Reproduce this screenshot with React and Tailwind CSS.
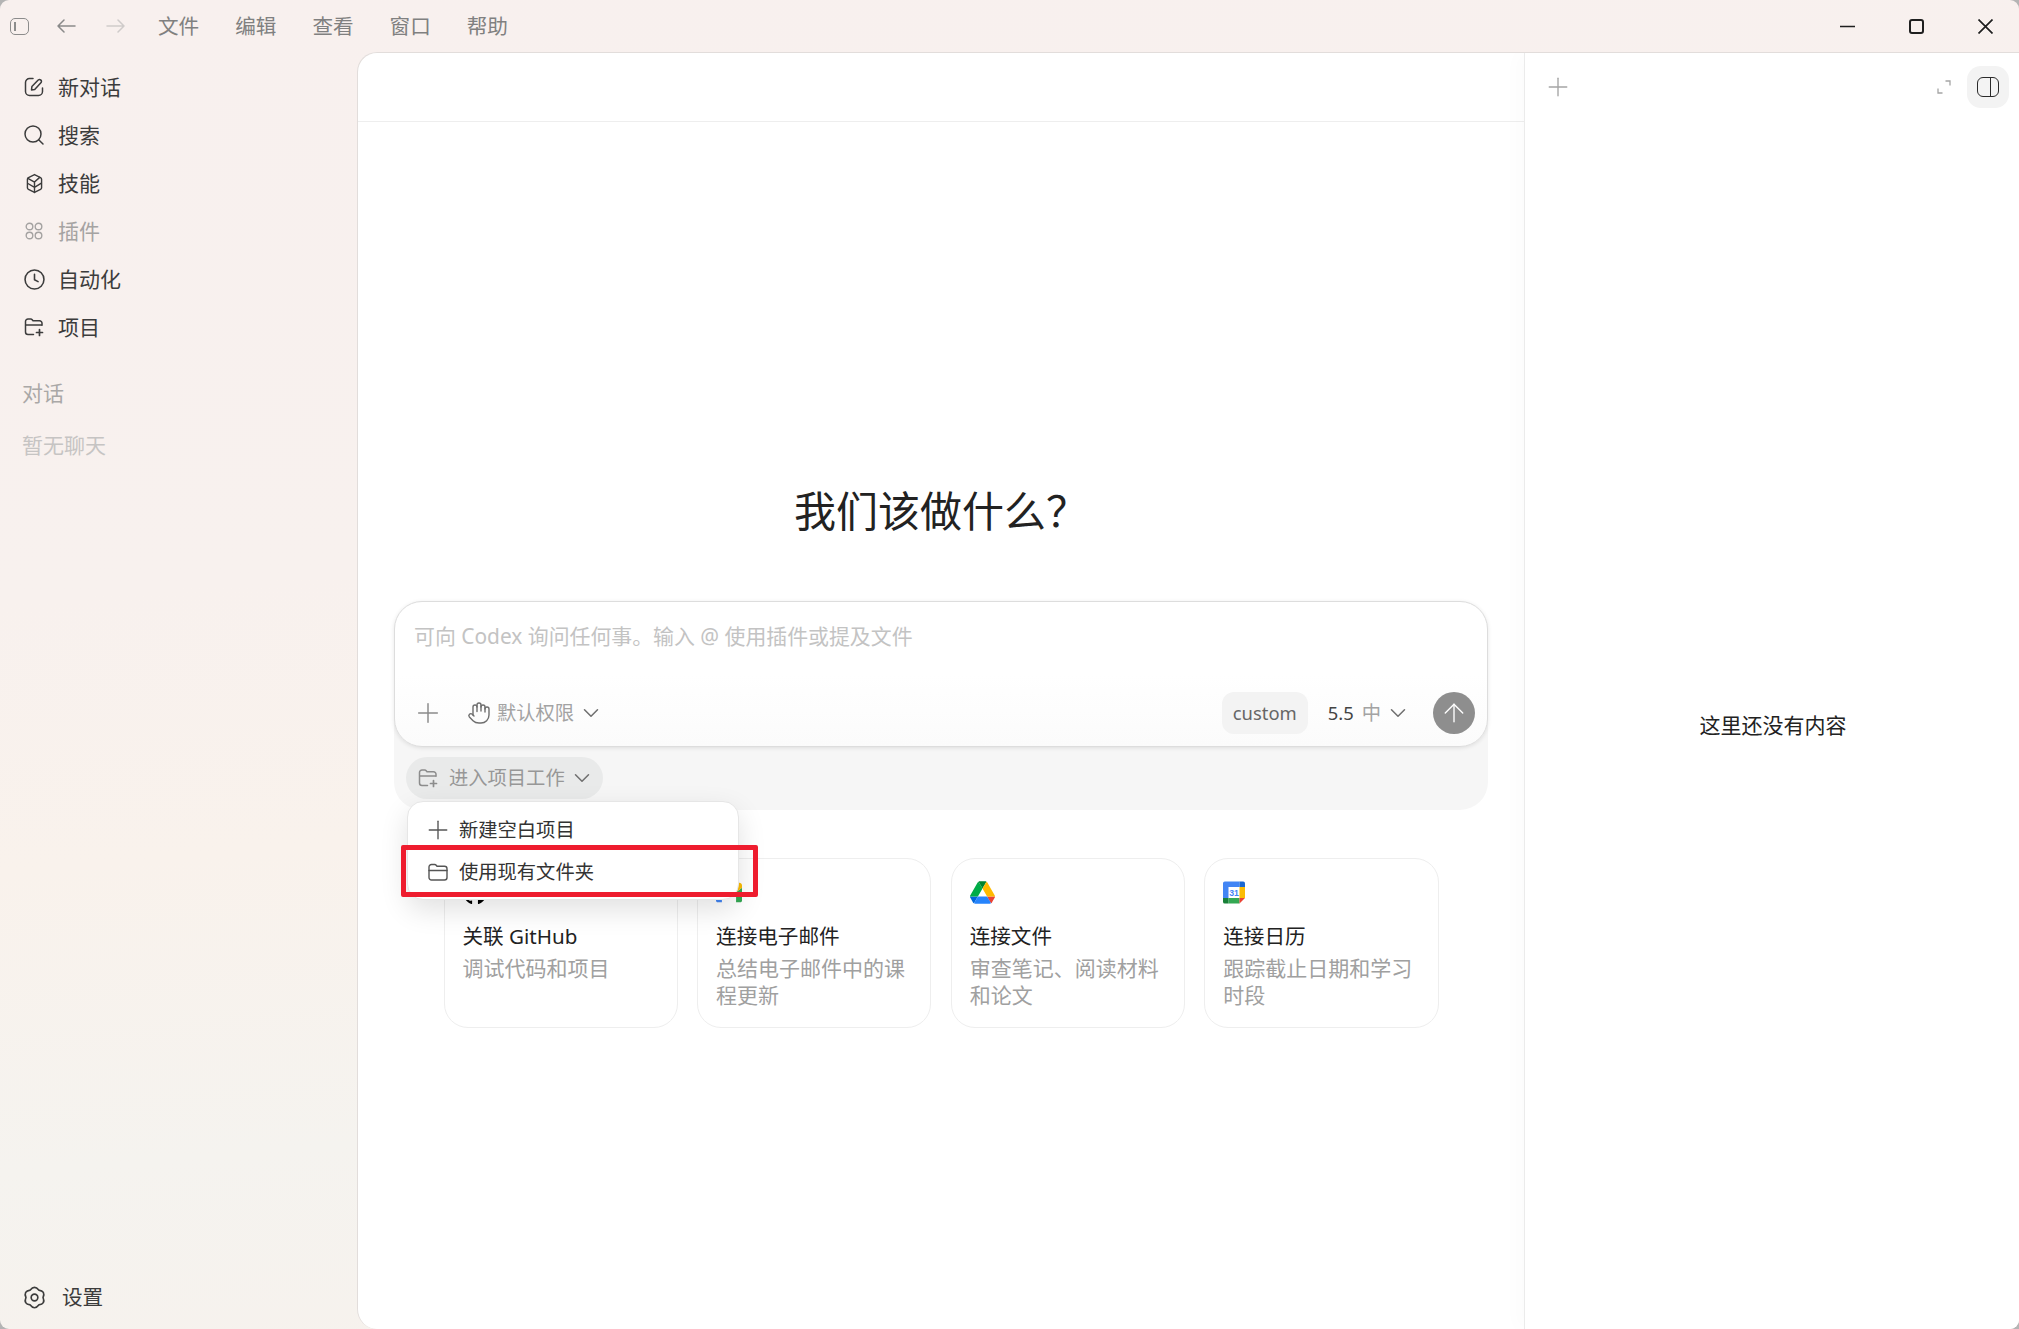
import React from "react";
import { ChevronDown, Hand, Plus, Search, ArrowUp } from "lucide-react";
import { FaGithub } from "react-icons/fa";

function FolderPlusIcon({ className }) {
  return (
    <svg viewBox="0 0 20 20" fill="none" stroke="currentColor" strokeWidth="1.5" strokeLinecap="round" strokeLinejoin="round" className={className}>
      <path d="M9.5 17.500H4a2.500 2.500 0 0 1-2.500-2.500V4.500a2.500 2.500 0 0 1 2.500-2.500h2.700c.6 0 1.100.3 1.500.8l.8 1h6.500a2.500 2.500 0 0 1 2.500 2.500v2" />
      <path d="M1.800 8h15.700" />
      <path d="M15.500 12.500v6M12.500 15.500h6" strokeWidth="1.700" />
    </svg>
  );
}

function ComposeIcon({ className }) {
  return (
    <svg viewBox="0 0 20 20" fill="none" stroke="currentColor" strokeWidth="1.500" strokeLinecap="round" strokeLinejoin="round" className={className}>
      <path d="M9 1.500H5.500a4 4 0 0 0-4 4v9a4 4 0 0 0 4 4h9a4 4 0 0 0 4-4V11" />
      <path d="M7.500 13l.4-3.400 6.300-6.500a1.900 1.900 0 0 1 2.700 2.700l-6.200 6.700z" />
    </svg>
  );
}

function CubeIcon({ className }) {
  return (
    <svg viewBox="0 0 18 22" fill="none" stroke="currentColor" strokeWidth="1.500" strokeLinecap="round" strokeLinejoin="round" className={className}>
      <path d="M9 1.500l6.400 3.200c.7.400 1.100 1 1.100 1.800v9c0 .8-.4 1.400-1.100 1.800L9 20.500l-6.400-3.200c-.7-.4-1.100-1-1.100-1.800v-9c0-.8.400-1.400 1.100-1.800z" />
      <path d="M2 5.500l7 4 5.500-5M9 9.500v11M2 11l7 4 7.300-4.500" />
    </svg>
  );
}

function DotsIcon({ className }) {
  return (
    <svg viewBox="0 0 18 18" fill="none" stroke="currentColor" strokeWidth="1.400" className={className}>
      <circle cx="4.500" cy="4.500" r="3.300" />
      <circle cx="13.500" cy="4.500" r="3.300" />
      <circle cx="4.500" cy="13.500" r="3.300" />
      <circle cx="13.500" cy="13.500" r="3.300" />
    </svg>
  );
}

function ClockIcon({ className }) {
  return (
    <svg viewBox="0 0 20 20" fill="none" stroke="currentColor" strokeWidth="1.500" strokeLinecap="round" strokeLinejoin="round" className={className}>
      <circle cx="10" cy="10" r="9" />
      <path d="M10 5v5.200l3.400 1.800" />
    </svg>
  );
}

function GearIcon({ className }) {
  return (
    <svg viewBox="0 0 24 24" fill="none" stroke="currentColor" strokeWidth="1.600" strokeLinecap="round" strokeLinejoin="round" className={className}>
      <path d="M7.900 4.900Q12 -0.500 16.100 4.900Q22.800 5.750 20.200 12Q22.800 18.250 16.100 19.100Q12 24.500 7.900 19.100Q1.200 18.250 3.800 12Q1.200 5.750 7.900 4.900Z" />
      <circle cx="12" cy="12" r="3.200" />
    </svg>
  );
}

function FolderIcon({ className }) {
  return (
    <svg viewBox="0 0 20 18" fill="none" stroke="currentColor" strokeWidth="1.400" strokeLinecap="round" strokeLinejoin="round" className={className}>
      <path d="M1 4a2.500 2.500 0 0 1 2.500-2.500h3.200c.6 0 1.100.3 1.500.8l.8 1h7.500A2.500 2.500 0 0 1 19 5.800v8.700a2.500 2.500 0 0 1-2.500 2.500h-13A2.500 2.500 0 0 1 1 14.500z" />
      <path d="M1 7.500h18" />
    </svg>
  );
}

function GmailIcon() {
  return (
    <svg viewBox="0 3 24 18" className="h-[21px] w-[26px]">
      <path fill="#4285f4" d="M1.636 21h3.819v-9.270L0 7.640v11.730C0 20.270.730 21 1.640 21z" />
      <path fill="#34a853" d="M18.545 21h3.819c.904 0 1.636-.732 1.636-1.636V7.640l-5.455 4.090z" />
      <path fill="#fbbc04" d="M18.545 4.640v7.090L24 7.640V5.460c0-2.020-2.310-3.180-3.930-1.960z" />
      <path fill="#ea4335" d="M5.455 11.730V4.640L12 9.550l6.545-4.910v7.090L12 16.640z" />
      <path fill="#c5221f" d="M0 5.460v2.180l5.455 4.090V4.640L3.930 3.490C2.310 2.280 0 3.440 0 5.460z" />
    </svg>
  );
}

function DriveIcon() {
  return (
    <svg viewBox="0 0 87.300 78" className="h-[23px] w-[25px]">
      <path d="m6.600 66.850 3.850 6.650c.8 1.400 1.950 2.500 3.300 3.300l13.750-23.800h-27.500c0 1.550.4 3.100 1.200 4.500z" fill="#0066da" />
      <path d="m43.650 25-13.750-23.800c-1.350.8-2.500 1.900-3.300 3.300l-25.400 44a9.060 9.060 0 0 0 -1.200 4.500h27.500z" fill="#00ac47" />
      <path d="m73.550 76.800c1.350-.8 2.500-1.900 3.300-3.300l1.600-2.750 7.650-13.250c.8-1.400 1.200-2.950 1.200-4.500h-27.502l5.852 11.500z" fill="#ea4335" />
      <path d="m43.650 25 13.750-23.800c-1.350-.8-2.900-1.200-4.500-1.200h-18.500c-1.600 0-3.150.45-4.500 1.200z" fill="#00832d" />
      <path d="m59.800 53h-32.300l-13.750 23.800c1.350.8 2.900 1.200 4.500 1.200h50.800c1.600 0 3.150-.45 4.500-1.200z" fill="#2684fc" />
      <path d="m73.400 26.500-12.700-22c-.8-1.400-1.950-2.500-3.300-3.300l-13.750 23.800 16.150 28h27.450c0-1.550-.4-3.100-1.200-4.500z" fill="#ffba00" />
    </svg>
  );
}

function CalendarIcon() {
  return (
    <svg viewBox="0 0 24 24" className="h-[23px] w-[22px]">
      <path d="M2 0h16v6H6v12H0V2a2 2 0 0 1 2-2z" fill="#4285f4" />
      <path d="M18 0h4a2 2 0 0 1 2 2v4h-6z" fill="#1967d2" />
      <rect x="18" y="6" width="6" height="12" fill="#fbbc04" />
      <rect x="6" y="18" width="12" height="6" fill="#34a853" />
      <path d="M0 18h6v6H2a2 2 0 0 1-2-2z" fill="#188038" />
      <path d="M18 18h6l-6 6z" fill="#ea4335" />
      <text x="12" y="15.800" textAnchor="middle" fontSize="9.500" fontWeight="700" fill="#4285f4" fontFamily="Liberation Sans, sans-serif">31</text>
    </svg>
  );
}

const NAV = [
  { label: "新对话", icon: <ComposeIcon className="h-[20px] w-[20px]" /> },
  { label: "搜索", icon: <Search className="h-[24px] w-[24px]" strokeWidth={1.5} /> },
  { label: "技能", icon: <CubeIcon className="h-[21px] w-[17px]" /> },
  { label: "插件", icon: <DotsIcon className="h-[18px] w-[18px]" />, muted: true },
  { label: "自动化", icon: <ClockIcon className="h-[21px] w-[21px]" /> },
  { label: "项目", icon: <FolderPlusIcon className="h-[20px] w-[20px]" /> },
];

const MENU = ["文件", "编辑", "查看", "窗口", "帮助"];

const CARDS = [
  { title: "关联 GitHub", desc: "调试代码和项目", icon: <FaGithub className="h-[24px] w-[24px] text-black" /> },
  { title: "连接电子邮件", desc: "总结电子邮件中的课程更新", icon: <GmailIcon /> },
  { title: "连接文件", desc: "审查笔记、阅读材料和论文", icon: <DriveIcon /> },
  { title: "连接日历", desc: "跟踪截止日期和学习时段", icon: <CalendarIcon /> },
];

export default function App() {
  return (
    <div className="h-[1329px] w-[2019px] overflow-hidden bg-[#b4b4b4] font-['Noto_Sans','Noto_Sans_CJK_SC',sans-serif]">
      <div className="flex h-full w-full flex-col overflow-hidden rounded-[9px] bg-[linear-gradient(175deg,#f8f0ee_0%,#f8f1ee_40%,#f9f2ec_58%,#f5f3ef_78%,#f7f1ec_100%)]">
        {/* title bar */}
        <div className="flex h-[52px] shrink-0 items-center">
          <div className="flex w-[158px] shrink-0 items-center">
            <div className="ml-[10px] flex h-[17px] w-[19px] items-center rounded-[5px] border-[1.5px] border-[#8c8c8c] pl-[3px]">
              <div className="h-[9px] w-[1.5px] bg-[#8c8c8c]" />
            </div>
            <svg viewBox="0 0 19 14" fill="none" stroke="#8a8a8a" strokeWidth="1.500" strokeLinecap="round" strokeLinejoin="round" className="ml-[28px] h-[14px] w-[19px]">
              <path d="M18 7H1M7 1 1 7l6 6" />
            </svg>
            <svg viewBox="0 0 19 14" fill="none" stroke="#cfcbca" strokeWidth="1.500" strokeLinecap="round" strokeLinejoin="round" className="ml-[30px] h-[14px] w-[19px]">
              <path d="M1 7h17M12 1l6 6-6 6" />
            </svg>
          </div>
          <div className="flex gap-[36px] text-[20.6px] leading-none text-[#808080]">
            {MENU.map((m) => (
              <span key={m}>{m}</span>
            ))}
          </div>
          <div className="ml-auto flex items-center gap-[54px] pr-[26px] text-[#1f1f1f]">
            <svg viewBox="0 0 15 15" fill="none" stroke="currentColor" strokeWidth="1.700" className="h-[15px] w-[15px]">
              <path d="M0 7.500h15" />
            </svg>
            <div className="h-[15px] w-[15px] rounded-[3px] border-[2px] border-[#1f1f1f]" />
            <svg viewBox="0 0 15 15" fill="none" stroke="currentColor" strokeWidth="1.700" className="h-[15px] w-[15px]">
              <path d="M.5.5l14 14M14.500.5l-14 14" />
            </svg>
          </div>
        </div>

        <div className="flex min-h-0 flex-1">
          {/* sidebar */}
          <aside className="flex w-[357px] shrink-0 flex-col pt-[11px] pb-[8px]">
            {NAV.map((n) => (
              <div key={n.label} className={`flex h-[48px] items-center ${n.muted ? "text-[#a5a3a2]" : "text-[#3c3c3c]"}`}>
                <span className="flex w-[58px] shrink-0 justify-center pr-[12px] pl-[22px]">{n.icon}</span>
                <span className="text-[21px] leading-none">{n.label}</span>
              </div>
            ))}
            <div className="mt-[19px] flex h-[48px] items-center pl-[22px] text-[21px] text-[#aaa8a7]">对话</div>
            <div className="flex h-[56px] items-center pl-[22px] text-[21px] text-[#c6c4c3]">暂无聊天</div>
            <div className="mt-auto flex h-[48px] items-center text-[#3c3c3c]">
              <span className="flex w-[62px] shrink-0 justify-center pr-[15px] pl-[22px]">
                <GearIcon className="h-[25px] w-[25px]" />
              </span>
              <span className="text-[20.6px] leading-none">设置</span>
            </div>
          </aside>

          {/* main */}
          <main className="flex min-w-0 flex-1 overflow-hidden rounded-l-[20px] border-t border-l border-[#e2dddb] bg-white">
            <section className="flex min-w-0 flex-1 flex-col">
              <div className="h-[69px] shrink-0 border-b border-[#eeeeee]" />
              <div className="flex flex-1 flex-col items-center pt-[362px]">
                <h1 className="h-[54px] text-[42px] leading-[54px] font-normal text-[#222222]">我们该做什么？</h1>

                <div className="relative mt-[63px] h-[209px] w-[1094px] rounded-[28px] bg-[#f6f6f6]">
                  <div className="flex h-[146px] flex-col justify-between rounded-[28px] border border-[#dddddd] bg-gradient-to-b from-white via-white to-[#fbfbfb] pr-[12px] pb-[12px] pl-[17px] shadow-[0_1px_4px_rgba(0,0,0,0.10)]">
                    <div className="pt-[20px] pl-[2px] text-[20.9px] leading-[28px] text-[#c3c3c3]">可向 Codex 询问任何事。输入 @ 使用插件或提及文件</div>
                    <div className="flex h-[42px] items-center">
                      <Plus className="h-[32px] w-[32px] text-[#8a8a8a]" strokeWidth={1.1} />
                      <Hand className="ml-[23px] h-[24px] w-[24px] text-[#6e6e6e]" strokeWidth={1.4} />
                      <span className="ml-[6px] text-[19.3px] leading-none text-[#a3a3a3]">默认权限</span>
                      <ChevronDown className="ml-[4px] h-[26px] w-[26px] text-[#707070]" strokeWidth={1.4} />
                      <div className="ml-auto flex h-[42px] w-[86px] items-center justify-center rounded-[12px] bg-[#f3f3f3] text-[18.4px] leading-none text-[#666666]">custom</div>
                      <span className="ml-[20px] w-[26px] text-[18.4px] leading-none text-[#444444]">5.5</span>
                      <span className="ml-[8px] text-[19.3px] leading-none text-[#a3a3a3]">中</span>
                      <ChevronDown className="ml-[3.5px] h-[26px] w-[26px] text-[#707070]" strokeWidth={1.4} />
                      <div className="ml-[22.5px] flex h-[42px] w-[42px] items-center justify-center rounded-full bg-[#8e8e8e]">
                        <ArrowUp className="h-[30px] w-[30px] text-white" strokeWidth={1.1} />
                      </div>
                    </div>
                  </div>
                  <div className="mt-[10px] ml-[12px] flex h-[42px] w-[197px] items-center rounded-full bg-[#e9eaea] pl-[12px] text-[#8c8c8c]">
                    <FolderPlusIcon className="h-[20px] w-[20px]" />
                    <span className="ml-[11px] text-[19.3px] leading-none text-[#979797]">进入项目工作</span>
                    <ChevronDown className="ml-[4px] h-[26px] w-[26px] text-[#707070]" strokeWidth={1.4} />
                  </div>

                  {/* dropdown menu */}
                  <div className="absolute top-[200px] left-[13px] z-10 h-[99px] w-[332px] rounded-[16px] border border-[#e6e6e6] bg-white pt-[6px] shadow-[0_10px_28px_rgba(0,0,0,0.12)]">
                    <div className="flex h-[44px] items-center text-[#333333]">
                      <Plus className="ml-[15px] h-[30px] w-[30px] text-[#555555]" strokeWidth={1.1} />
                      <span className="ml-[6px] text-[19.3px] leading-none">新建空白项目</span>
                    </div>
                    <div className="flex h-[40px] items-center text-[#333333]">
                      <FolderIcon className="ml-[20px] h-[18px] w-[20px] text-[#555555]" />
                      <span className="ml-[11px] text-[19.3px] leading-none">使用现有文件夹</span>
                    </div>
                  </div>
                  {/* annotation */}
                  <div className="absolute top-[244px] left-[7px] z-20 h-[52px] w-[357px] rounded-[2px] border-[5px] border-[#ee1c2e]" />
                </div>

                <div className="mt-[48px] grid h-[170px] w-[995px] grid-cols-4 gap-[19.3px]">
                  {CARDS.map((c) => (
                    <div key={c.title} className="flex flex-col rounded-[24px] border border-[#eeeeee] bg-white pt-[21px] pr-[14px] pl-[18px]">
                      <div className="flex h-[25px] items-center">{c.icon}</div>
                      <div className="mt-[18px] text-[20.6px] leading-[27px] text-[#222222]">{c.title}</div>
                      <div className="mt-[5px] text-[21px] leading-[27px] text-[#a0a0a0]">{c.desc}</div>
                    </div>
                  ))}
                </div>
              </div>
            </section>

            {/* right panel */}
            <section className="flex w-[495px] shrink-0 flex-col border-l border-[#ebebeb] shadow-[-8px_0_16px_rgba(0,0,0,0.015)]">
              <div className="flex h-[55px] shrink-0 items-end pr-[10px] pl-[18px]">
                <div className="flex w-full items-center">
                  <Plus className="h-[30px] w-[30px] text-[#a5a5a5]" strokeWidth={1.1} />
                  <svg viewBox="0 0 14 14" fill="none" stroke="#a5a5a5" strokeWidth="1.300" className="ml-auto h-[14px] w-[14px]">
                    <path d="M8.500 1H13V5.500M5.500 13H1V8.500" />
                  </svg>
                  <div className="ml-[16px] flex h-[42px] w-[42px] items-center justify-center rounded-[14px] bg-[#f3f3f3]">
                    <div className="flex h-[20px] w-[22px] justify-end rounded-[6px] border-[1.5px] border-[#2a2a2a]">
                      <div className="h-full w-[8px] border-l-[1.5px] border-[#2a2a2a]" />
                    </div>
                  </div>
                </div>
              </div>
              <div className="flex flex-1 items-center justify-center pt-[14px] pl-[2px] text-[21px] text-[#222222]">这里还没有内容</div>
            </section>
          </main>
        </div>
      </div>
    </div>
  );
}
